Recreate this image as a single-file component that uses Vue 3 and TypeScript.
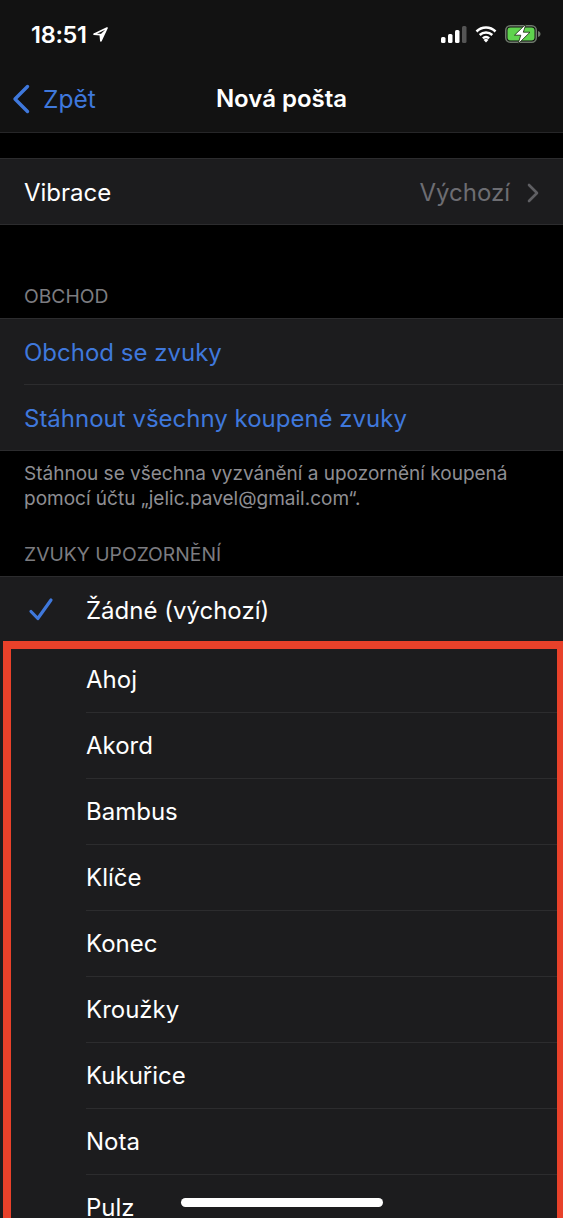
<script setup lang="ts">
const sounds = ['Ahoj', 'Akord', 'Bambus', 'Klíče', 'Konec', 'Kroužky', 'Kukuřice', 'Nota', 'Pulz']
</script>

<template>
  <div class="screen">
    <header class="top">
      <div class="status">
        <div class="time">
          <span>18:51</span>
          <svg width="15" height="15" viewBox="0 0 15 15"><path d="M14 1 1 7.200l6.300.4.6 6.400Z" fill="none" stroke="#fff" stroke-width="1.700" stroke-linejoin="round" /><path d="M14 1 7.300 7.600l.6 6.400Z" fill="#fff" /></svg>
        </div>
        <div class="indicators">
          <svg width="26" height="17" viewBox="0 0 26 17">
            <rect x="0" y="11" width="4.500" height="6" rx="1.500" fill="#fff" />
            <rect x="7" y="8" width="4.500" height="9" rx="1.500" fill="#fff" />
            <rect x="14" y="4" width="4.500" height="13" rx="1.500" fill="#fff" />
            <rect x="21" y="0" width="4.500" height="17" rx="1.500" fill="#555" />
          </svg>
          <svg width="22" height="17" viewBox="0 0 22 17">
            <path d="M1.500 5.500a13.500 13.500 0 0 1 19 0M4.700 9a9 9 0 0 1 12.600 0M7.900 12.300a4.500 4.500 0 0 1 6.200 0" fill="none" stroke="#fff" stroke-width="2.500" />
            <path d="M8.600 13.900a3.400 3.400 0 0 1 4.800 0L11 16.400Z" fill="#fff" />
          </svg>
          <svg width="36" height="20" viewBox="0 0 36 20">
            <rect x="0.750" y="1.750" width="30.500" height="16.500" rx="4.500" fill="none" stroke="#6f7a6c" stroke-width="1.500" />
            <rect x="2.500" y="3.500" width="27" height="13" rx="3" fill="#5fd34e" />
            <path d="M33 7v6c1.500-.4 2.500-1.500 2.500-3S34.500 7.400 33 7Z" fill="#6f7a6c" />
            <path d="M21 0 9.500 11.200h6.300L13 20 25 8.200h-6.700Z" fill="#fff" stroke="#17240f" stroke-width="0.800" stroke-linejoin="round" />
          </svg>
        </div>
      </div>
      <nav class="nav">
        <div class="back">
          <svg width="18" height="30" viewBox="0 0 18 30"><path d="M15.500 2.500 3 15l12.500 12.500" fill="none" stroke="#3f78dc" stroke-width="3.400" stroke-linecap="round" stroke-linejoin="round" /></svg>
          <span>Zpět</span>
        </div>
        <h1 class="title">Nová pošta</h1>
      </nav>
    </header>

    <section class="group first">
      <div class="row">
        <span>Vibrace</span>
        <div class="detail">
          <span>Výchozí</span>
          <svg width="12" height="20" viewBox="0 0 12 20"><path d="M2 2l8 8-8 8" fill="none" stroke="#5f5f63" stroke-width="2.600" stroke-linecap="round" stroke-linejoin="round" /></svg>
        </div>
      </div>
    </section>

    <p class="caption store-caption">OBCHOD</p>
    <section class="group">
      <div class="row link"><span>Obchod se zvuky</span></div>
      <div class="row link inset"><span>Stáhnout všechny koupené zvuky</span></div>
    </section>
    <p class="note">Stáhnou se všechna vyzvánění a upozornění koupená pomocí účtu „jelic.pavel@gmail.com“.</p>

    <p class="caption sounds-caption">ZVUKY UPOZORNĚNÍ</p>
    <section class="group">
      <div class="row sound selected">
        <svg class="check" width="26" height="24" viewBox="0 0 26 24"><path d="M3 14.500 9.800 21.500 23 3" fill="none" stroke="#3f78dc" stroke-width="3.200" stroke-linecap="round" stroke-linejoin="round" /></svg>
        <span class="sound-name">Žádné (výchozí)</span>
      </div>
      <div v-for="name in sounds" :key="name" class="row sound">
        <span class="sound-name">{{ name }}</span>
      </div>
    </section>

    <div class="highlight"></div>
    <div class="home"></div>
  </div>
</template>

<style>
html,
body {
  margin: 0;
  background: #000;
}
</style>

<style scoped>
.screen {
  position: relative;
  width: 563px;
  height: 1218px;
  overflow: hidden;
  background: #000;
  color: #fff;
  font-family: Inter, "Liberation Sans", sans-serif;
}

.top {
  height: 133px;
  background: #121212;
  box-sizing: border-box;
  border-bottom: 1px solid #262628;
}

.status {
  display: flex;
  justify-content: space-between;
  align-items: center;
  height: 34px;
  padding: 17px 22px 0 31px;
}

.time {
  display: flex;
  align-items: center;
  gap: 6px;
  font-size: 23.5px;
  font-weight: 600;
  letter-spacing: -0.3px;
}

.indicators {
  display: flex;
  align-items: center;
  gap: 8px;
}

.nav {
  position: relative;
  display: flex;
  align-items: center;
  justify-content: center;
  height: 64px;
  margin-top: 15px;
}

.back {
  position: absolute;
  left: 12px;
  top: 18px;
  display: flex;
  align-items: center;
  gap: 13px;
  color: #3f78dc;
  font-size: 24.5px;
}

.title {
  margin: 0;
  font-size: 24px;
  font-weight: 600;
}

.group {
  background: #1c1c1e;
  border-top: 1px solid #2c2c2e;
  border-bottom: 1px solid #2c2c2e;
}

.first {
  margin-top: 25px;
}

.row {
  display: flex;
  justify-content: space-between;
  align-items: center;
  box-sizing: border-box;
  height: 65px;
  padding: 2px 24px 0;
  font-size: 24px;
}

.detail {
  display: flex;
  align-items: center;
  gap: 17px;
  color: #6d6d72;
}

.link {
  color: #3f78dc;
}

.inset {
  height: 66px;
  border-top: 1px solid #2c2c2e;
  margin-left: 24px;
  padding-left: 0;
}

.caption {
  margin: 0;
  padding: 0 24px;
  color: #7c7c80;
  font-size: 19.3px;
  line-height: 22px;
}

.store-caption {
  margin-top: 60px;
  margin-bottom: 11px;
}

.sounds-caption {
  margin-top: 32px;
  margin-bottom: 11px;
}

.note {
  margin: 10px 0 0;
  padding: 0 24px;
  color: #8e8e93;
  font-size: 19px;
  line-height: 25px;
}

.sound {
  position: relative;
  justify-content: flex-start;
  height: 66px;
  padding: 2px 0 0;
}

.selected {
  height: 69px;
  padding: 0 0 2px;
}

.check {
  position: absolute;
  left: 28px;
  top: 20px;
}

.sound-name {
  display: flex;
  align-items: center;
  flex: 1;
  height: 100%;
  margin-left: 86px;
  border-bottom: 1px solid #2c2c2e;
}

.selected .sound-name {
  border-bottom: none;
}

.highlight {
  position: absolute;
  left: 3px;
  right: -2px;
  top: 641px;
  height: 620px;
  border: 8px solid #e8412a;
}

.home {
  position: absolute;
  left: 181px;
  top: 1198px;
  width: 202px;
  height: 9px;
  border-radius: 5px;
  background: #fff;
}
</style>
